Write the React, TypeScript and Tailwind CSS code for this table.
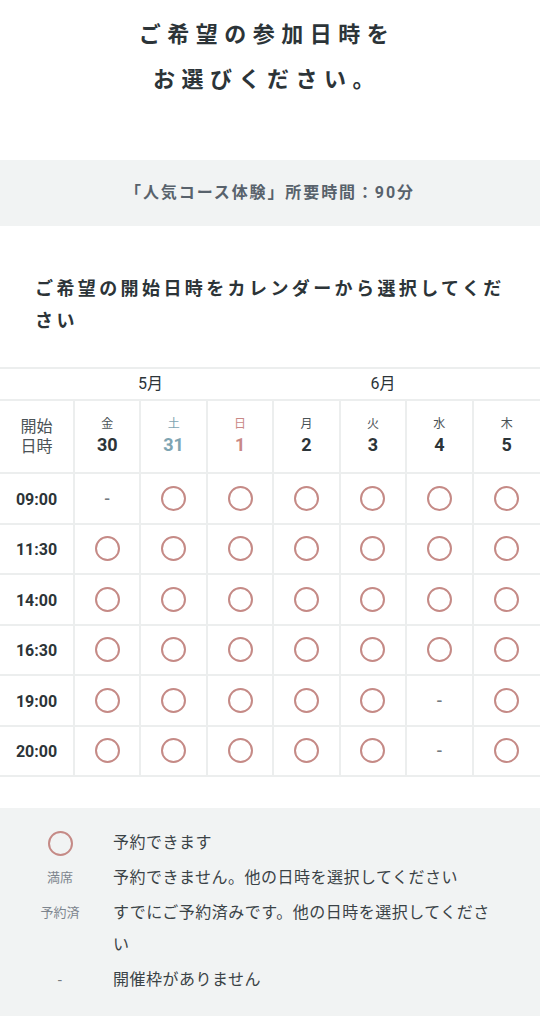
import React from "react";

const FONT = 'Roboto, "Noto Sans CJK JP", sans-serif';

const Circle = () => (
  <div className="w-[25px] h-[25px] rounded-full border-[2.5px] border-[#c58a86]" />
);

const Dash = () => <span className="text-[17px] text-[#737a80] leading-none font-medium">-</span>;

const days = [
  { dow: "金", d: "30", c: "text-[#2c3438]", dc: "text-[#4a5256]" },
  { dow: "土", d: "31", c: "text-[#7ea4b2]", dc: "text-[#7ea4b2]" },
  { dow: "日", d: "1", c: "text-[#c98886]", dc: "text-[#c98886]" },
  { dow: "月", d: "2", c: "text-[#2c3438]", dc: "text-[#4a5256]" },
  { dow: "火", d: "3", c: "text-[#2c3438]", dc: "text-[#4a5256]" },
  { dow: "水", d: "4", c: "text-[#2c3438]", dc: "text-[#4a5256]" },
  { dow: "木", d: "5", c: "text-[#2c3438]", dc: "text-[#4a5256]" },
];

const rows: { t: string; s: number[] }[] = [
  { t: "09:00", s: [0, 1, 1, 1, 1, 1, 1] },
  { t: "11:30", s: [1, 1, 1, 1, 1, 1, 1] },
  { t: "14:00", s: [1, 1, 1, 1, 1, 1, 1] },
  { t: "16:30", s: [1, 1, 1, 1, 1, 1, 1] },
  { t: "19:00", s: [1, 1, 1, 1, 1, 0, 1] },
  { t: "20:00", s: [1, 1, 1, 1, 1, 0, 1] },
];

export default function App() {
  return (
    <div className="w-[540px] min-h-[1024px] bg-white" style={{ fontFamily: FONT }}>
      <h1 className="pt-[12px] text-center text-[22px] font-bold leading-[45px] tracking-[6.5px] text-[#2c3438] pr-[6px]">
        ご希望の参加日時を
        <br />
        お選びください。
      </h1>

      <div className="mt-[58px] h-[66px] bg-[#f1f3f3] flex items-center justify-center">
        <p className="text-[16px] font-bold tracking-[1.9px] text-[#58626c]">
          「人気コース体験」所要時間：90分
        </p>
      </div>

      <h2 className="mt-[47px] px-[35px] text-[18px] font-bold leading-[32px] tracking-[3.4px] text-[#2c3438]">
        ご希望の開始日時をカレンダーから選択してください
      </h2>

      <div className="mt-[30px]">
        <div className="grid grid-cols-[75px_repeat(7,minmax(0,1fr))] h-[34px] border-y-2 border-[#eceeee] items-center">
          <div className="col-start-2 col-span-2 text-center pl-[18px] text-[16px] text-[#2c3438]">5月</div>
          <div className="col-span-5 text-center pl-[18px] text-[16px] text-[#2c3438]">6月</div>
        </div>
        <div className="grid grid-cols-[75px_repeat(7,minmax(0,1fr))] h-[73px] border-b-2 border-[#eceeee]">
          <div className="border-r-2 border-[#eceeee] flex flex-col items-center justify-center text-[16px] leading-[20px] text-[#4a5256]">
            <span>開始</span>
            <span>日時</span>
          </div>
          {days.map((d, i) => (
            <div
              key={i}
              className={`flex flex-col items-center justify-center ${i < 6 ? "border-r-2 border-[#eceeee]" : ""}`}
            >
              <span className={`text-[12px] leading-[16px] ${d.dc}`}>{d.dow}</span>
              <span className={`text-[18px] font-bold leading-[26px] ${d.c}`}>{d.d}</span>
            </div>
          ))}
        </div>
        {rows.map((r) => (
          <div
            key={r.t}
            className="grid grid-cols-[75px_repeat(7,minmax(0,1fr))] h-[50.5px] border-b-2 border-[#eceeee]"
          >
            <div className="border-r-2 border-[#eceeee] flex items-center justify-center pt-[3px] text-[16px] font-bold text-[#2c3438]">
              {r.t}
            </div>
            {r.s.map((v, i) => (
              <div
                key={i}
                className={`flex items-center justify-center ${i < 6 ? "border-r-2 border-[#eceeee]" : ""}`}
              >
                {v ? <Circle /> : <Dash />}
              </div>
            ))}
          </div>
        ))}
      </div>

      <div className="mt-[31px] bg-[#f1f3f3] pt-[19px] pb-[20px] pl-[35px] pr-[35px] flex flex-col gap-[3px] text-[16px] leading-[32px] tracking-[0.5px] text-[#3a4246]">
        <div className="flex">
          <div className="w-[50px] shrink-0 flex items-center justify-center">
            <Circle />
          </div>
          <div className="ml-[28px]">予約できます</div>
        </div>
        <div className="flex">
          <div className="w-[50px] shrink-0 text-center text-[13px] text-[#7d858e] tracking-normal">満席</div>
          <div className="ml-[28px]">予約できません。他の日時を選択してください</div>
        </div>
        <div className="flex">
          <div className="w-[50px] shrink-0 text-center text-[13px] text-[#7d858e] tracking-normal">予約済</div>
          <div className="ml-[28px]">すでにご予約済みです。他の日時を選択してください</div>
        </div>
        <div className="flex">
          <div className="w-[50px] shrink-0 text-center text-[15px] text-[#737a80]">-</div>
          <div className="ml-[28px]">開催枠がありません</div>
        </div>
      </div>
    </div>
  );
}
